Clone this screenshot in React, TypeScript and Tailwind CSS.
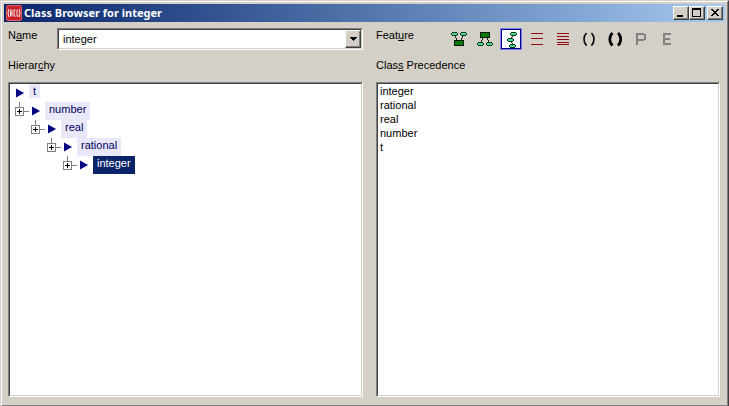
import type { ReactNode } from "react";

const classes = ["integer", "rational", "real", "number", "t"];
const hierarchy = ["t", "number", "real", "rational", "integer"];

const sunken =
  "border border-t-[#808080] border-l-[#808080] border-r-white border-b-white";
const sunkenInner =
  "border border-t-[#404040] border-l-[#404040] border-r-[#d4d0c8] border-b-[#d4d0c8] bg-white";
const raised =
  "border border-t-white border-l-white border-r-[#404040] border-b-[#404040] bg-[#d4d0c8] shadow-[inset_-1px_-1px_0_#808080]";

function CaptionButton({ label, children }: { label: string; children: ReactNode }) {
  return (
    <button type="button" aria-label={label} className={`h-[14px] w-4 ${raised}`}>
      <svg viewBox="0 0 14 12" className="block h-3 w-[14px]" shapeRendering="crispEdges" fill="#000">
        {children}
      </svg>
    </button>
  );
}

function Node({ x, y }: { x: number; y: number }) {
  return (
    <g>
      <path d={`M${x + 1} ${y}h5v1h1v2h-1v1h-5v-1h-1v-2h1z`} fill="#06351c" />
      <path d={`M${x + 1} ${y + 1}h5v2h-5z`} fill="#48d890" />
    </g>
  );
}

function ToolButton({
  label,
  selected,
  children,
}: {
  label: string;
  selected?: boolean;
  children: ReactNode;
}) {
  return (
    <button
      type="button"
      aria-label={label}
      aria-pressed={!!selected}
      className={`flex h-[22px] w-[22px] items-center justify-center ${
        selected
          ? "border border-[#8080f0] bg-white shadow-[inset_0_0_0_1px_#000080]"
          : ""
      }`}
    >
      <svg viewBox="0 0 18 18" className="block h-[18px] w-[18px] shrink-0" shapeRendering="crispEdges">
        {children}
      </svg>
    </button>
  );
}

function Toolbar() {
  return (
    <div role="toolbar" aria-label="Feature" className="flex gap-1">
      <ToolButton label="Superclasses">
        <path d="M5 6h1v2H5zM6 8h1v2H6zM12 6h1v2h-1zM11 8h1v2h-1z" fill="#222" />
        <Node x={1} y={2} />
        <Node x={10} y={2} />
        <path d="M4 10h10v6H4z" fill="#001a00" />
        <path d="M5 11h8v4H5z" fill="#0a780a" />
      </ToolButton>
      <ToolButton label="Subclasses">
        <path d="M6 8h1v2H6zM5 10h1v2H5zM11 8h1v2h-1zM12 10h1v2h-1z" fill="#222" />
        <path d="M4 2h10v6H4z" fill="#001a00" />
        <path d="M5 3h8v4H5z" fill="#0a780a" />
        <Node x={1} y={12} />
        <Node x={10} y={12} />
      </ToolButton>
      <ToolButton label="Class Precedence" selected>
        <path d="M10 6h1v1h-1zM9 7h1v1H9zM9 12h1v1H9zM10 13h1v1h-1z" fill="#222" />
        <Node x={8} y={2} />
        <Node x={5} y={8} />
        <Node x={7} y={14} />
      </ToolButton>
      <ToolButton label="Direct Slots">
        <path d="M3 3h12v1H3zM3 8h12v1H3zM3 14h12v1H3z" fill="#900810" />
      </ToolButton>
      <ToolButton label="All Slots">
        <path d="M3 3h12v1H3zM3 6h12v1H3zM3 9h12v1H3zM3 12h12v1H3zM3 14h12v1H3z" fill="#900810" />
      </ToolButton>
      <ToolButton label="Direct Methods">
        <g fill="none" stroke="#000" strokeWidth="1.600" shapeRendering="auto">
          <path d="M6.500 3Q4 5.500 4 9.300T6.500 15.600M11.500 3Q14 5.500 14 9.300T11.500 15.600" />
        </g>
      </ToolButton>
      <ToolButton label="All Methods">
        <g fill="none" stroke="#000" strokeWidth="2.700" shapeRendering="auto">
          <path d="M6.500 3Q3.800 5.500 3.800 9.300T6.500 15.600M12 3Q14.700 5.500 14.700 9.300T12 15.600" />
        </g>
      </ToolButton>
      <ToolButton label="Properties">
        <path d="M4 3h8v2H6v4h6v2H6v4H4zM12 4h2v6h-2z" fill="#808080" />
      </ToolButton>
      <ToolButton label="Expand">
        <path d="M5 3h8v2H7v3h5v2H7v3h6v2H5z" fill="#808080" />
      </ToolButton>
    </div>
  );
}

function TreeItem({ depth }: { depth: number }) {
  const name = hierarchy[depth];
  const root = depth === 0;
  const last = depth === hierarchy.length - 1;
  const tone = last ? "bg-[#0a246a] text-white" : "bg-[#e8e8fa] text-[#000060]";
  return (
    <li role="treeitem" aria-expanded={!last} aria-selected={last} className={depth > 1 ? "pl-4" : ""}>
      <div className="flex h-[18px] items-start">
        {!root && (
          <button type="button" aria-label={`Expand ${name}`} className="h-[18px] w-4">
            <svg viewBox="0 0 16 18" className="block h-[18px] w-4" shapeRendering="crispEdges">
              <path d="M6 0h1v5H6zM11 9h5v1h-5z" fill="#808080" />
              <path d="M2.500 5.500h8v8h-8z" fill="#fff" stroke="#808080" />
              <path d="M4 9h5v1H4zM6 7h1v5H6z" fill="#000" />
            </svg>
          </button>
        )}
        <svg viewBox="0 0 16 18" className="block h-[18px] w-4 shrink-0">
          <path d="M3 4.500l8 4.500-8 4.500z" fill="#000080" />
        </svg>
        <span className={`px-1 leading-[15px] ${root ? "h-[14px]" : "h-[18px]"} ${tone}`}>
          {name}
        </span>
      </div>
      {!last && (
        <ul role="group">
          <TreeItem depth={depth + 1} />
        </ul>
      )}
    </li>
  );
}

export default function App() {
  return (
    <div className="flex min-h-screen border-t border-r border-l border-t-[#d4d0c8] border-r-[#404040] border-l-[#d4d0c8] bg-[#d4d0c8] font-['Liberation_Sans',Arial,sans-serif] text-[11px] leading-[14px] text-black">
      <div className="flex min-w-0 flex-1 flex-col border border-t-white border-r-[#808080] border-b-[#808080] border-l-white">
        <header className="mx-0.5 mt-0.5 flex h-[18px] items-center bg-linear-to-r from-[#0a246a] to-[#a6caf0] px-0.5">
          <svg viewBox="0 0 16 16" className="h-4 w-4 shrink-0" aria-hidden="true">
            <rect x="0.500" y="0.500" width="15" height="15" rx="1.500" fill="#c8222c" stroke="#e06068" />
            <path
              d="M2.800 4q-1.500 4 0 8M13.200 4q1.500 4 0 8M4.500 11.500V5.500l0.700-1 0.800 1v6M4.500 8.500h1.500M9.500 4.900H8v6.200h1.500M11 4.500v6.600h1.500"
              fill="none"
              stroke="#fff"
              strokeWidth="0.900"
            />
          </svg>
          <h1 className="ml-0.5 flex-1 truncate font-['Noto_Sans','Open_Sans',sans-serif] text-[11px] leading-[18px] font-bold text-white">
            Class Browser for integer
          </h1>
          <CaptionButton label="Minimize">
            <path d="M3 8h6v2H3z" />
          </CaptionButton>
          <CaptionButton label="Maximize">
            <path d="M2 1h9v9H2zM3 3v6h7V3z" fillRule="evenodd" />
          </CaptionButton>
          <div className="ml-0.5 flex">
            <CaptionButton label="Close">
              <path d="M3 2h2v1h1v1h2V3h1V2h2v1h-1v1H9v1H8v1h1v1h1v1h1v1H9V8H8V7H6v1H5v1H3V8h1V7h1V6h1V5H5V4H4V3H3z" />
            </CaptionButton>
          </div>
        </header>

        <main className="grid flex-1 grid-cols-[355fr_344fr] gap-x-[13px] pt-1.5 pr-[7px] pb-2 pl-1.5">
          <section className="flex flex-col">
            <div className="flex h-[22px] items-start">
              <label htmlFor="class-name" className="w-[49px]">
                N<u>a</u>me
              </label>
              <div className={`flex h-[22px] flex-1 ${sunken}`}>
                <div className={`relative flex flex-1 ${sunkenInner}`}>
                  <select
                    id="class-name"
                    defaultValue="integer"
                    className="w-full appearance-none bg-white px-1 text-[11px] leading-[18px] outline-none"
                  >
                    {classes.map((c) => (
                      <option key={c}>{c}</option>
                    ))}
                  </select>
                  <span
                    aria-hidden="true"
                    className={`pointer-events-none absolute inset-y-0 right-0 flex w-4 items-center justify-center ${raised}`}
                  >
                    <svg viewBox="0 0 7 4" className="h-1 w-[7px]" shapeRendering="crispEdges">
                      <path d="M0 0h7v1H6v1H5v1H4v1H3V3H2V2H1V1H0z" />
                    </svg>
                  </span>
                </div>
              </div>
            </div>
            <h2 id="hierarchy-label" className="mt-2 mb-2.5">
              Hierar<u>c</u>hy
            </h2>
            <div className={`flex flex-1 ${sunken}`}>
              <div className={`flex-1 pl-[3px] ${sunkenInner}`}>
                <ul role="tree" aria-labelledby="hierarchy-label">
                  <TreeItem depth={0} />
                </ul>
              </div>
            </div>
          </section>

          <section className="flex flex-col">
            <div className="flex h-[22px] items-start">
              <span className="w-[72px]">
                Feat<u>u</u>re
              </span>
              <Toolbar />
            </div>
            <h2 id="feature-label" className="mt-2 mb-2.5">
              Clas<u>s</u> Precedence
            </h2>
            <div className={`flex flex-1 ${sunken}`}>
              <ul role="listbox" aria-labelledby="feature-label" className={`flex-1 px-0.5 ${sunkenInner}`}>
                {classes.map((c) => (
                  <li key={c} role="option" aria-selected={false}>
                    {c}
                  </li>
                ))}
              </ul>
            </div>
          </section>
        </main>
      </div>
    </div>
  );
}
